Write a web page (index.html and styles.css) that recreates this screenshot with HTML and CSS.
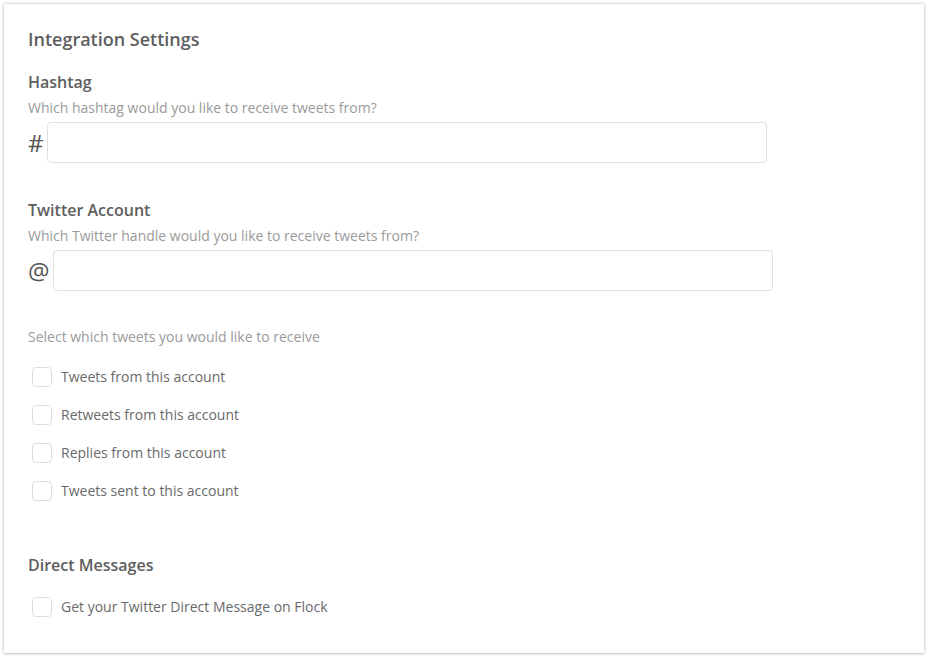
FILE: index.html
```html
<!DOCTYPE html>
<html>
<head>
<meta charset="utf-8">
<link rel="stylesheet" href="styles.css">
</head>
<body>
<div class="card">
  <h1 class="title">Integration Settings</h1>

  <section class="field">
    <h2 class="heading">Hashtag</h2>
    <p class="desc">Which hashtag would you like to receive tweets from?</p>
    <div class="input-row">
      <span class="prefix hash">#</span>
      <input class="text-input" type="text">
    </div>
  </section>

  <section class="field field-twitter">
    <h2 class="heading">Twitter Account</h2>
    <p class="desc">Which Twitter handle would you like to receive tweets from?</p>
    <div class="input-row">
      <span class="prefix at">@</span>
      <input class="text-input" type="text">
    </div>
  </section>

  <p class="desc select-label">Select which tweets you would like to receive</p>
  <ul class="checks">
    <li class="check"><span class="box"></span><span class="label">Tweets from this account</span></li>
    <li class="check"><span class="box"></span><span class="label">Retweets from this account</span></li>
    <li class="check"><span class="box"></span><span class="label">Replies from this account</span></li>
    <li class="check"><span class="box"></span><span class="label">Tweets sent to this account</span></li>
  </ul>

  <h2 class="heading dm-heading">Direct Messages</h2>
  <ul class="checks dm-checks">
    <li class="check"><span class="box"></span><span class="label">Get your Twitter Direct Message on Flock</span></li>
  </ul>
</div>
</body>
</html>
```

FILE: styles.css
```css
html, body {
  margin: 0;
  padding: 0;
  background: #ffffff;
}
body {
  padding: 4px 5px 6px 4px;
  font-family: "Open Sans", "Noto Sans", sans-serif;
  color: #5a5a5a;
}
.card {
  background: #fff;
  box-shadow: 0 0 3px rgba(0,0,0,0.28), 0 1px 2px rgba(0,0,0,0.12);
  height: 649px;
  box-sizing: border-box;
  padding: 23px 24px 0 24px;
}
.title {
  margin: 0;
  font-size: 18px;
  line-height: 24px;
  font-weight: 600;
  color: #5e5e5e;
}
.heading {
  margin: 0;
  font-size: 16px;
  line-height: 22px;
  font-weight: 600;
  color: #5e5e5e;
}
.field {
  margin-top: 20px;
}
.field-twitter {
  margin-top: 36px;
}
.desc {
  margin: 5px 0 0 0;
  font-size: 14px;
  line-height: 20px;
  color: #9a9a9a;
}
.input-row {
  display: flex;
  align-items: center;
  margin-top: 4px;
}
.prefix {
  font-size: 24px;
  line-height: 40px;
  color: #555;
  font-weight: 400;
}
.hash { margin-right: 3px; }
.at { margin-right: 3px; }
.text-input {
  width: 720px;
  height: 41px;
  box-sizing: border-box;
  border: 1px solid #e0e0e0;
  border-radius: 4px;
  background: #fff;
  margin: 0;
  padding: 0 10px;
  outline: none;
  font-family: inherit;
}
.select-label {
  margin-top: 36px;
}
.checks {
  list-style: none;
  margin: 20px 0 0 4px;
  padding: 0;
  display: flex;
  flex-direction: column;
  gap: 18px;
}
.check {
  display: flex;
  align-items: center;
  height: 20px;
}
.box {
  width: 20px;
  height: 20px;
  box-sizing: border-box;
  border: 1px solid #dcdcdc;
  border-radius: 4px;
  background: #fff;
  flex: none;
}
.label {
  margin-left: 9px;
  font-size: 14px;
  line-height: 20px;
  color: #6a6a6a;
}
.dm-heading {
  margin-top: 53px;
}
.dm-checks {
  margin-top: 21px;
}
```
